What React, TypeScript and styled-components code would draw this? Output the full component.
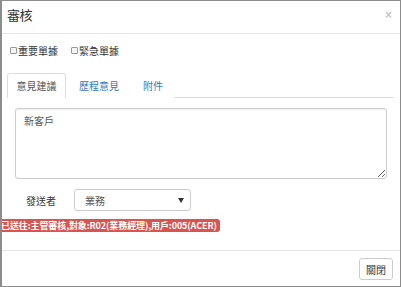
import React from 'react'
import styled, { createGlobalStyle } from 'styled-components'

const GlobalStyle = createGlobalStyle`
  html, body {
    margin: 0;
    padding: 0;
    background: #fff;
  }
  body {
    font-family: "Noto Sans CJK TC", "Liberation Sans", sans-serif;
    color: #333;
  }
`

const tabs = ['意見建議', '歷程意見', '附件']

export default function App() {
  const [active, setActive] = React.useState(0)

  return (
    <>
      <GlobalStyle />
      <Modal>
        <Header>
          <Title>審核</Title>
          <Close>×</Close>
        </Header>
        <Body>
          <CheckRow>
            <CheckLabel>
              <Check type="checkbox" />
              重要單據
            </CheckLabel>
            <CheckLabel>
              <Check type="checkbox" />
              緊急單據
            </CheckLabel>
          </CheckRow>
          <Tabs>
            {tabs.map((t, i) => (
              <Tab key={t} $active={i === active} onClick={() => setActive(i)}>
                {t}
              </Tab>
            ))}
          </Tabs>
          <Pane>
            <Note defaultValue="新客戶" />
            <FormRow>
              <FieldLabel>發送者</FieldLabel>
              <Select>
                <span>業務</span>
                <Caret />
              </Select>
            </FormRow>
          </Pane>
          <Status>已送往:主管審核,對象:R02(業務經理),用戶:005(ACER)</Status>
        </Body>
        <Footer>
          <Button type="button">關閉</Button>
        </Footer>
      </Modal>
    </>
  )
}

const Modal = styled.div`
  width: 401px;
  height: 287px;
  box-sizing: border-box;
  border: 1px solid #8c8c8c;
  border-left-width: 2px;
  display: flex;
  flex-direction: column;
  background: #fff;
  overflow: hidden;
`
const Header = styled.div`
  height: 32px;
  flex: none;
  border-bottom: 1px solid #e5e5e5;
  display: flex;
  align-items: center;
  justify-content: space-between;
  padding: 0 8px 4px 5px;
  box-sizing: border-box;
  height: 33px;
`
const Title = styled.div`
  font-size: 13px;
  line-height: 16px;
  color: #333;
  letter-spacing: -0.5px;
`
const Close = styled.div`
  font-size: 12px;
  font-weight: bold;
  color: #c8c8c8;
  line-height: 1;
  font-family: "Liberation Sans", sans-serif;
`
const Body = styled.div`
  flex: 1;
  display: flex;
  flex-direction: column;
`
const CheckRow = styled.div`
  display: flex;
  gap: 13px;
  padding: 8px 0 0 8px;
  height: 18px;
  align-items: center;
`
const CheckLabel = styled.label`
  display: flex;
  align-items: center;
  font-size: 10px;
  line-height: 14px;
  color: #333;
`
const Check = styled.input`
  appearance: none;
  width: 7px;
  height: 7px;
  margin: 0 1px 2px 0;
  border: 1px solid #9a9a9a;
  border-radius: 1px;
  background: #f4f4f4;
`
const Tabs = styled.div`
  display: flex;
  margin: 13px 6px 0 5px;
  border-bottom: 1px solid #ddd;
  height: 24px;
`
const Tab = styled.div<{ $active: boolean }>`
  width: ${(p) => (p.$active ? '59px' : 'auto')};
  padding: ${(p) => (p.$active ? '0' : '0 10px 0 12px')};
  box-sizing: border-box;
  display: flex;
  align-items: center;
  justify-content: center;
  font-size: 10px;
  color: ${(p) => (p.$active ? '#555' : '#337ab7')};
  border: 1px solid ${(p) => (p.$active ? '#ddd' : 'transparent')};
  border-bottom-color: ${(p) => (p.$active ? '#fff' : 'transparent')};
  border-radius: 3px 3px 0 0;
  margin-bottom: -1px;
  background: #fff;
  cursor: pointer;
`
const Pane = styled.div`
  padding: 10px 0 0 13px;
`
const Note = styled.textarea`
  display: block;
  width: 372px;
  height: 71px;
  box-sizing: border-box;
  border: 1px solid #ccc;
  border-radius: 3px;
  padding: 4px 8px;
  font-family: inherit;
  font-size: 10px;
  color: #555;
  resize: vertical;
  box-shadow: inset 0 1px 1px rgba(0, 0, 0, 0.06);
`
const FormRow = styled.div`
  display: flex;
  align-items: center;
  margin-top: 10px;
`
const FieldLabel = styled.div`
  width: 59px;
  padding-left: 11px;
  box-sizing: border-box;
  font-size: 10px;
  color: #333;
`
const Select = styled.div`
  width: 117px;
  height: 22px;
  box-sizing: border-box;
  border: 1px solid #ccc;
  border-radius: 3px;
  display: flex;
  align-items: center;
  justify-content: space-between;
  padding: 0 6px 0 10px;
  font-size: 10px;
  color: #555;
`
const Caret = styled.span`
  width: 0;
  height: 0;
  border-left: 3px solid transparent;
  border-right: 3px solid transparent;
  border-top: 5px solid #333;
`
const Status = styled.div`
  align-self: flex-start;
  margin: 8px 0 0 -2px;
  background: #d9534f;
  color: #fff;
  font-weight: bold;
  font-size: 9px;
  line-height: 13px;
  height: 13px;
  padding: 0 3px 0 1px;
  border-radius: 0 3px 3px 0;
  white-space: nowrap;
  letter-spacing: -0.1px;
`
const Footer = styled.div`
  height: 35px;
  flex: none;
  border-top: 1px solid #e5e5e5;
  display: flex;
  justify-content: flex-end;
  align-items: center;
  padding: 1px 7px 0 0;
  box-sizing: content-box;
  height: 34px;
`
const Button = styled.button`
  width: 34px;
  height: 22px;
  background: #fff;
  border: 1px solid #ccc;
  border-radius: 3px;
  font-family: inherit;
  font-size: 10px;
  color: #333;
  padding: 0;
`
